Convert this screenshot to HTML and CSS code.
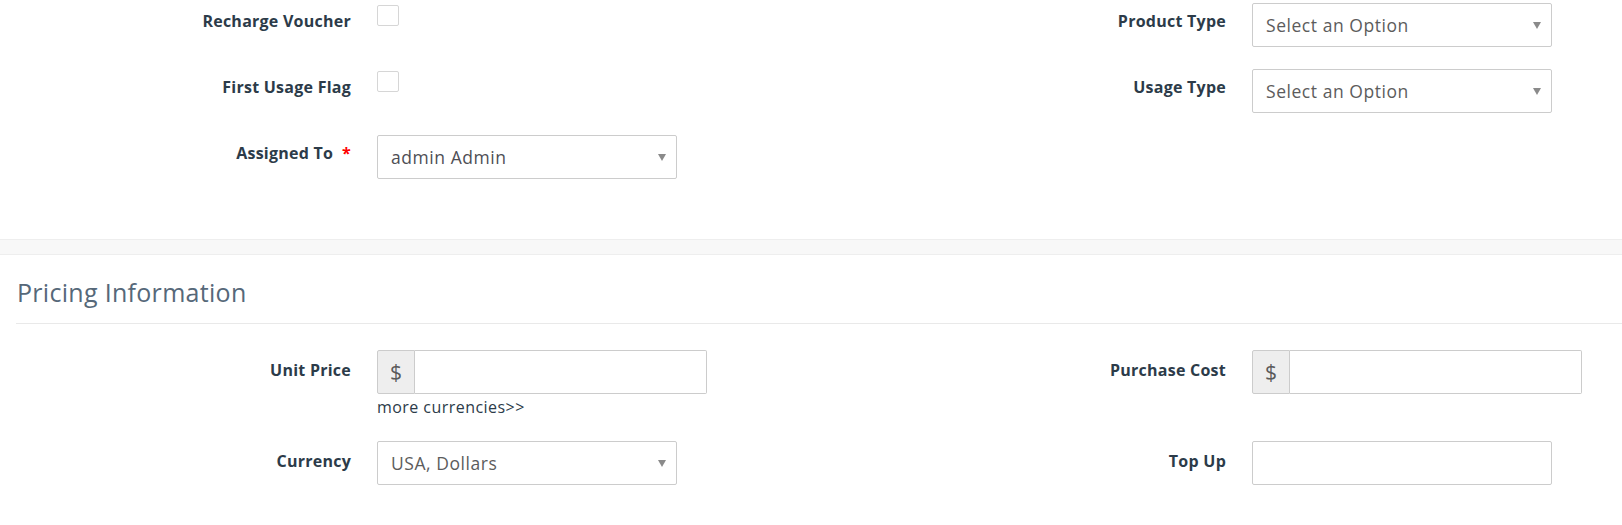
FILE: index.html
```html
<!DOCTYPE html>
<html>
<head>
<meta charset="utf-8">
<link rel="stylesheet" href="styles.css">
</head>
<body>
<div class="block block-top">
  <div class="form-grid">
    <div class="label">Recharge Voucher</div>
    <div class="value"><span class="checkbox"></span></div>
    <div class="label">Product Type</div>
    <div class="value"><div class="select"><span class="select-text">Select an Option</span><span class="caret"></span></div></div>

    <div class="label">First Usage Flag</div>
    <div class="value"><span class="checkbox"></span></div>
    <div class="label">Usage Type</div>
    <div class="value"><div class="select"><span class="select-text">Select an Option</span><span class="caret"></span></div></div>

    <div class="label">Assigned To&nbsp;&nbsp;<span class="req">*</span></div>
    <div class="value"><div class="select"><span class="select-text dark">admin Admin</span><span class="caret"></span></div></div>
    <div class="label"></div>
    <div class="value"></div>
  </div>
</div>
<div class="band"></div>
<div class="block block-pricing">
  <div class="block-head">
    <h3 class="block-title">Pricing Information</h3>
  </div>
  <div class="form-grid form-grid-pricing">
    <div class="label">Unit Price</div>
    <div class="value">
      <div class="input-group"><span class="addon">$</span><span class="input"></span></div>
      <div class="help-link">more currencies&gt;&gt;</div>
    </div>
    <div class="label">Purchase Cost</div>
    <div class="value">
      <div class="input-group"><span class="addon">$</span><span class="input"></span></div>
    </div>

    <div class="label">Currency</div>
    <div class="value"><div class="select"><span class="select-text">USA, Dollars</span><span class="caret"></span></div></div>
    <div class="label">Top Up</div>
    <div class="value"><span class="input input-plain"></span></div>
  </div>
</div>
</body>
</html>
```
FILE: styles.css
```css
html, body {
  margin: 0;
  padding: 0;
  background: #ffffff;
  font-family: "Open Sans", "Noto Sans", sans-serif;
  color: #2c3b49;
}

.block-top {
  padding-top: 3px;
  padding-bottom: 60px;
}

.form-grid {
  display: grid;
  grid-template-columns: 377px 498px 377px 1fr;
  row-gap: 22px;
}

.form-grid-pricing {
  row-gap: 24px;
  padding-top: 26px;
  padding-bottom: 40px;
}

.label {
  text-align: right;
  padding-right: 26px;
  padding-top: 8px;
  font-size: 16px;
  line-height: 20px;
  font-weight: 700;
  letter-spacing: 0.25px;
  color: #2c3b49;
  white-space: nowrap;
}

.form-grid-pricing .label {
  padding-top: 10px;
}

.req {
  color: #ff0000;
  font-weight: 700;
}

.value {
  min-height: 44px;
}

.checkbox {
  display: block;
  width: 20px;
  height: 19px;
  margin-top: 2px;
  border: 1px solid #d6d6d6;
  border-radius: 2px;
  background: #fff;
}

.select {
  box-sizing: border-box;
  width: 300px;
  height: 44px;
  border: 1px solid #cccccc;
  border-radius: 2px;
  background: #fff;
  display: flex;
  align-items: center;
  justify-content: space-between;
  padding: 0 10px 0 13px;
}

.select-text {
  font-size: 17.5px;
  letter-spacing: 0.55px;
  color: #5c5c5c;
  font-weight: 400;
}

.select-text.dark {
  color: #4e4e55;
}

.caret {
  width: 0;
  height: 0;
  border-left: 4px solid transparent;
  border-right: 4px solid transparent;
  border-top: 7px solid #8a8a8a;
  margin-top: 1px;
}

.band {
  height: 14px;
  background: #f8f8f8;
  border-top: 1px solid #eeeeee;
  border-bottom: 1px solid #eeeeee;
}

.block-head {
  margin-left: 16px;
  padding-top: 19px;
  padding-bottom: 13px;
  border-bottom: 1px solid #e9e9e9;
}

.block-title {
  margin: 0;
  font-size: 25px;
  line-height: 36px;
  font-weight: 400;
  letter-spacing: 0.3px;
  color: #566879;
  padding-left: 1px;
}

.input-group {
  display: flex;
  width: 330px;
  height: 44px;
  box-sizing: border-box;
}

.addon {
  box-sizing: border-box;
  width: 38px;
  height: 44px;
  background: #eeeeee;
  border: 1px solid #cccccc;
  border-radius: 2px 0 0 2px;
  display: flex;
  align-items: center;
  justify-content: center;
  font-size: 21px;
  font-weight: 400;
  color: #5a5a5a;
}

.input {
  box-sizing: border-box;
  display: block;
  flex: 1;
  height: 44px;
  border: 1px solid #cccccc;
  border-left: none;
  border-radius: 0 2px 2px 0;
  background: #fff;
}

.input-plain {
  width: 300px;
  border-left: 1px solid #cccccc;
  border-radius: 2px;
}

.help-link {
  margin-top: 3px;
  font-size: 16px;
  line-height: 20px;
  letter-spacing: 0.45px;
  color: #2c3b49;
}
```
